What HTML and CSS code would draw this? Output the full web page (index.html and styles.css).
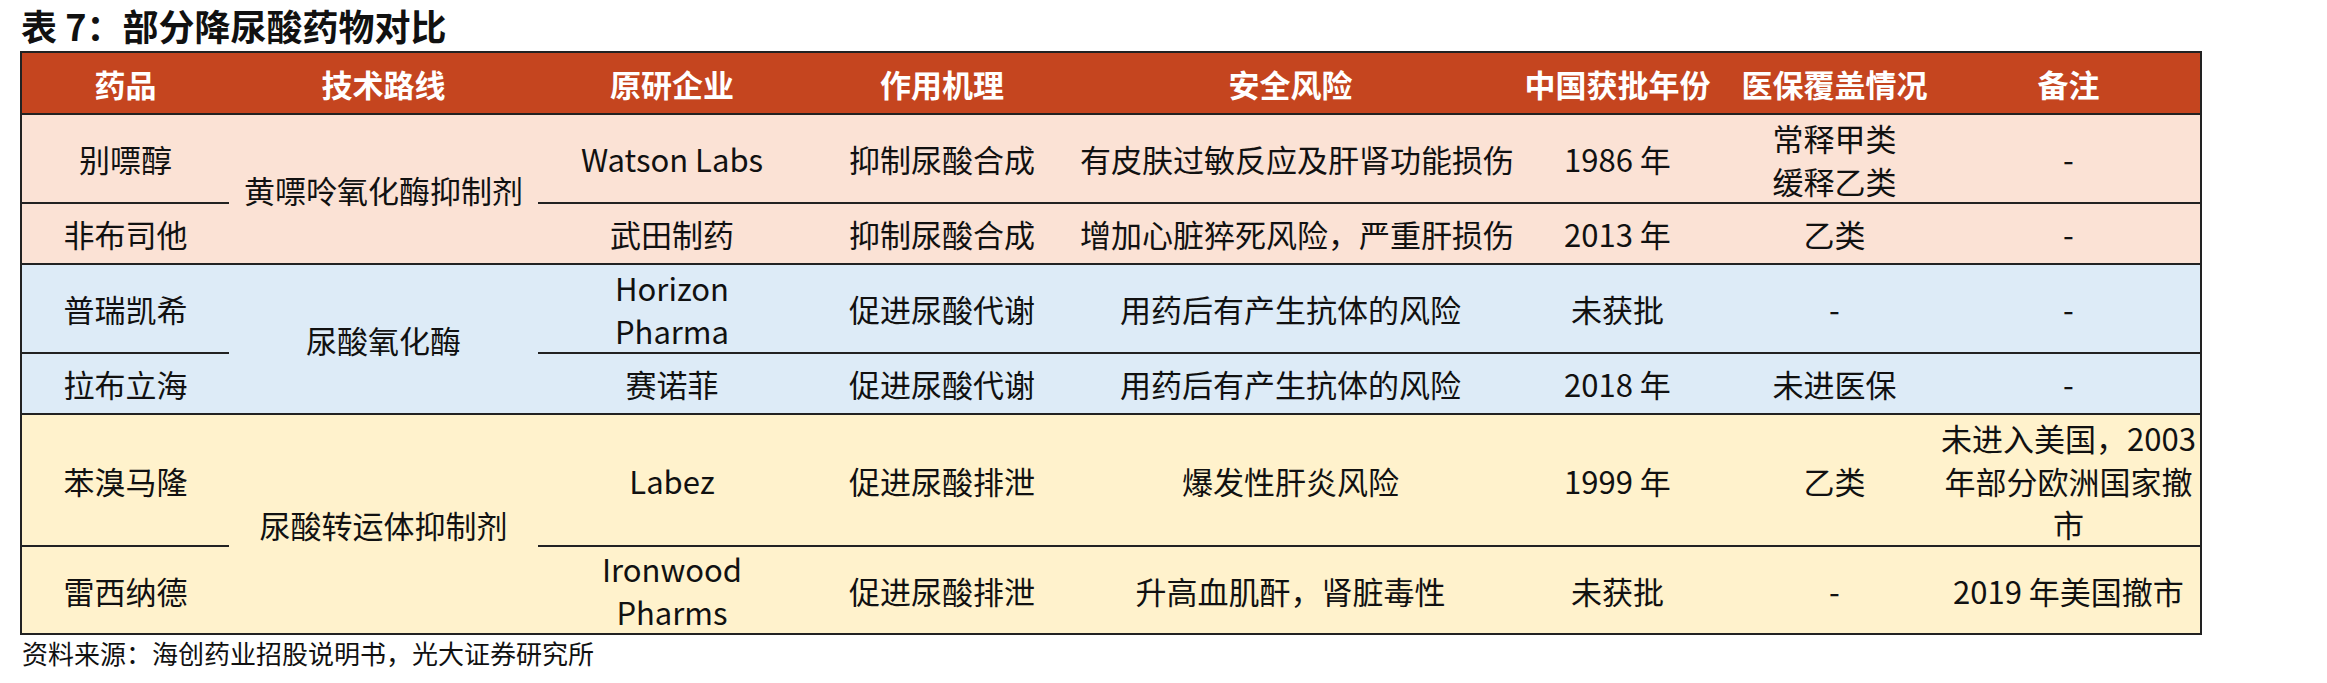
FILE: index.html
```html
<!DOCTYPE html>
<html lang="zh-CN">
<head>
<meta charset="utf-8">
<title>表 7：部分降尿酸药物对比</title>
<link rel="stylesheet" href="styles.css">
</head>
<body>
<div class="page">
  <h1 class="title">表 7：部分降尿酸药物对比</h1>
  <table class="drug-table">
    <colgroup>
      <col class="c-drug">
      <col class="c-route">
      <col class="c-company">
      <col class="c-mech">
      <col class="c-risk">
      <col class="c-year">
      <col class="c-ins">
      <col class="c-note">
    </colgroup>
    <thead>
      <tr class="r-head">
        <th>药品</th>
        <th>技术路线</th>
        <th>原研企业</th>
        <th>作用机理</th>
        <th>安全风险</th>
        <th>中国获批年份</th>
        <th>医保覆盖情况</th>
        <th>备注</th>
      </tr>
    </thead>
    <tbody class="g-peach">
      <tr class="r-tall">
        <td>别嘌醇</td>
        <td rowspan="2">黄嘌呤氧化酶抑制剂</td>
        <td>Watson Labs</td>
        <td>抑制尿酸合成</td>
        <td>有皮肤过敏反应及肝肾功能损伤</td>
        <td>1986 年</td>
        <td>常释甲类<br>缓释乙类</td>
        <td>-</td>
      </tr>
      <tr class="r-short">
        <td>非布司他</td>
        <td>武田制药</td>
        <td>抑制尿酸合成</td>
        <td>增加心脏猝死风险，严重肝损伤</td>
        <td>2013 年</td>
        <td>乙类</td>
        <td>-</td>
      </tr>
    </tbody>
    <tbody class="g-blue">
      <tr class="r-tall">
        <td>普瑞凯希</td>
        <td rowspan="2">尿酸氧化酶</td>
        <td>Horizon<br>Pharma</td>
        <td>促进尿酸代谢</td>
        <td>用药后有产生抗体的风险</td>
        <td>未获批</td>
        <td>-</td>
        <td>-</td>
      </tr>
      <tr class="r-short">
        <td>拉布立海</td>
        <td>赛诺菲</td>
        <td>促进尿酸代谢</td>
        <td>用药后有产生抗体的风险</td>
        <td>2018 年</td>
        <td>未进医保</td>
        <td>-</td>
      </tr>
    </tbody>
    <tbody class="g-yellow">
      <tr class="r-triple">
        <td>苯溴马隆</td>
        <td rowspan="2">尿酸转运体抑制剂</td>
        <td>Labez</td>
        <td>促进尿酸排泄</td>
        <td>爆发性肝炎风险</td>
        <td>1999 年</td>
        <td>乙类</td>
        <td>未进入美国，2003<br>年部分欧洲国家撤<br>市</td>
      </tr>
      <tr class="r-last">
        <td>雷西纳德</td>
        <td>Ironwood<br>Pharms</td>
        <td>促进尿酸排泄</td>
        <td>升高血肌酐，肾脏毒性</td>
        <td>未获批</td>
        <td>-</td>
        <td>2019 年美国撤市</td>
      </tr>
    </tbody>
  </table>
  <p class="source">资料来源：海创药业招股说明书，光大证券研究所</p>
</div>
</body>
</html>
```

FILE: styles.css
```css
html, body {
  margin: 0;
  padding: 0;
  background: #ffffff;
}

body {
  font-family: "Noto Sans CJK SC", "Noto Sans", sans-serif;
  color: #111111;
}

.page {
  padding-left: 20px;
}

.title {
  margin: 0;
  padding-left: 1px;
  font-size: 36px;
  font-weight: 700;
  line-height: 51px;
  height: 51px;
  color: #111111;
}

.drug-table {
  width: 2180px;
  table-layout: fixed;
  border-collapse: collapse;
  border: 2px solid #222222;
  font-size: 31px;
  line-height: 43px;
}

.c-drug { width: 208px; }
.c-route { width: 309px; }
.c-company { width: 268px; }
.c-mech { width: 272px; }
.c-risk { width: 425px; }
.c-year { width: 229px; }
.c-ins { width: 205px; }
.c-note { width: 264px; }

.drug-table th,
.drug-table td {
  padding: 0 2px;
  text-align: center;
  vertical-align: middle;
  white-space: nowrap;
  border-bottom: 2px solid #222222;
}

.r-head th {
  height: 60px;
  background: #c5451f;
  color: #ffffff;
  font-size: 31px;
  font-weight: 700;
}

.r-tall td { height: 87px; }
.r-short td { height: 59px; }
.r-triple td { height: 130px; }
.r-last td { height: 86px; }

.g-peach td { background: #fbe2d5; }
.g-blue td { background: #ddebf7; }
.g-yellow td { background: #fff2cc; }

.source {
  margin: 0;
  padding-left: 2px;
  font-size: 26px;
  line-height: 36px;
  color: #111111;
}
```
